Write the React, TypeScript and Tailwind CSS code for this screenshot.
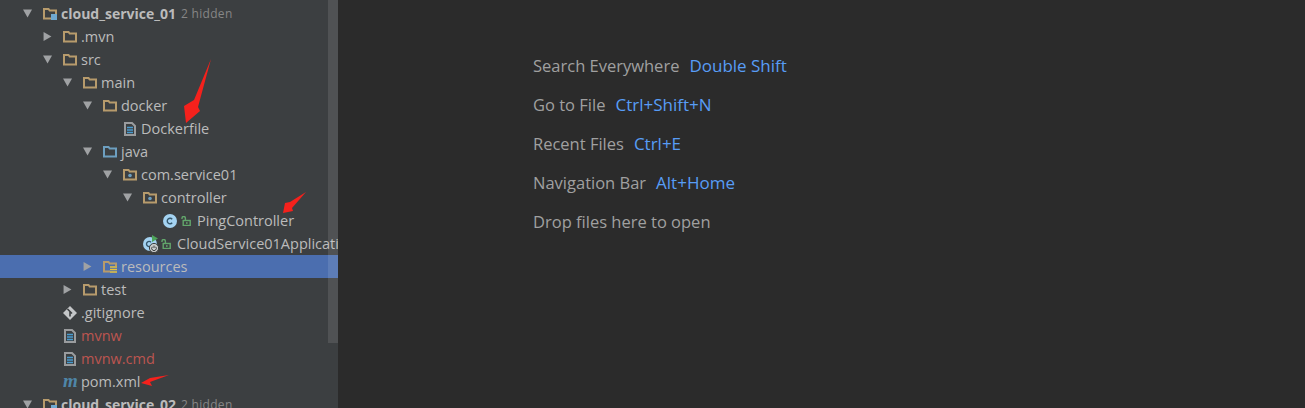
import React from 'react';

type IconKind = 'module' | 'folder' | 'source' | 'package' | 'resources' | 'file' | 'git' | 'maven' | 'class' | 'app';

interface TreeRow {
  depth: number;
  arrow?: 'open' | 'closed';
  icon: IconKind;
  label: string;
  bold?: boolean;
  hint?: string;
  locked?: boolean;
  selected?: boolean;
  changed?: boolean;
}

const rows: TreeRow[] = [
  { depth: 0, arrow: 'open', icon: 'module', label: 'cloud_service_01', bold: true, hint: '2 hidden' },
  { depth: 1, arrow: 'closed', icon: 'folder', label: '.mvn' },
  { depth: 1, arrow: 'open', icon: 'folder', label: 'src' },
  { depth: 2, arrow: 'open', icon: 'folder', label: 'main' },
  { depth: 3, arrow: 'open', icon: 'folder', label: 'docker' },
  { depth: 4, icon: 'file', label: 'Dockerfile' },
  { depth: 3, arrow: 'open', icon: 'source', label: 'java' },
  { depth: 4, arrow: 'open', icon: 'package', label: 'com.service01' },
  { depth: 5, arrow: 'open', icon: 'package', label: 'controller' },
  { depth: 6, icon: 'class', label: 'PingController', locked: true },
  { depth: 5, icon: 'app', label: 'CloudService01Application', locked: true },
  { depth: 3, arrow: 'closed', icon: 'resources', label: 'resources', selected: true },
  { depth: 2, arrow: 'closed', icon: 'folder', label: 'test' },
  { depth: 1, icon: 'git', label: '.gitignore' },
  { depth: 1, icon: 'file', label: 'mvnw', changed: true },
  { depth: 1, icon: 'file', label: 'mvnw.cmd', changed: true },
  { depth: 1, icon: 'maven', label: 'pom.xml' },
  { depth: 0, arrow: 'open', icon: 'module', label: 'cloud_service_02', bold: true, hint: '2 hidden' },
];

const hints = [
  { label: 'Search Everywhere', key: 'Double Shift' },
  { label: 'Go to File', key: 'Ctrl+Shift+N' },
  { label: 'Recent Files', key: 'Ctrl+E' },
  { label: 'Navigation Bar', key: 'Alt+Home' },
  { label: 'Drop files here to open' },
];

function FolderShape({ color }: { color: string }) {
  return <path d="M1 11.5V2h4.5l1.2 1.6H13V11.5Z" fill="none" stroke={color} strokeWidth="2" />;
}

function TreeIcon({ kind }: { kind: IconKind }) {
  const tan = '#b79b6c';
  return (
    <svg width="14" height="14" viewBox="0 0 14 14" className="shrink-0 overflow-visible">
      {kind === 'folder' && <FolderShape color={tan} />}
      {kind === 'source' && <FolderShape color="#6d9fc0" />}
      {kind === 'module' && (
        <>
          <FolderShape color={tan} />
          <rect x="8" y="7" width="6" height="6" fill="#6fa8d0" />
        </>
      )}
      {kind === 'package' && (
        <>
          <FolderShape color={tan} />
          <circle cx="7" cy="7.5" r="1.8" fill="#6d9fc0" />
        </>
      )}
      {kind === 'resources' && (
        <>
          <FolderShape color={tan} />
          <rect x="7" y="6" width="7" height="8" fill="#4b6eaf" />
          <path d="M7 7h7M7 9.5h7M7 12h7" stroke="#e8c33f" strokeWidth="1.6" />
        </>
      )}
      {kind === 'file' && (
        <>
          <path d="M2 1h7l3 3v9H2Z" fill="#3c3f41" stroke="#9a9c9e" strokeWidth="2" />
          <path d="M4 5.5h6M4 8h6M4 10.5h6" stroke="#4a9ccf" strokeWidth="1.3" />
        </>
      )}
      {kind === 'git' && (
        <>
          <path d="M7 0 14 7 7 14 0 7Z" fill="#c4c6c8" />
          <path d="M4.5 3 9 7.5M7 5.5V10.5" stroke="#3c3f41" strokeWidth="1.6" />
        </>
      )}
      {kind === 'class' && (
        <>
          <circle cx="7" cy="7" r="7" fill="#a4d3f2" />
          <path d="M9.2 5.2A2.8 2.8 0 1 0 9.2 8.8" fill="none" stroke="#35586e" strokeWidth="1.4" />
        </>
      )}
      {kind === 'app' && (
        <>
          <circle cx="7" cy="7" r="7" fill="#a4d3f2" />
          <path d="M8 5.2A2.6 2.6 0 1 0 8 8.8" fill="none" stroke="#35586e" strokeWidth="1.4" />
          <path d="M9 -2l6 3.5-6 3.5Z" fill="#4ea45a" />
          <circle cx="11" cy="11" r="4.6" fill="#c9cbcc" stroke="#3c3f41" />
          <path d="M11 8.6v2.4M9.3 9.8a2.3 2.3 0 1 0 3.4 0" fill="none" stroke="#3c3f41" strokeWidth="1" />
        </>
      )}
      {kind === 'maven' && (
        <text x="0" y="12" fontFamily="'Liberation Serif', serif" fontStyle="italic" fontWeight="700" fontSize="19" fill="#4f86a8">
          m
        </text>
      )}
    </svg>
  );
}

function LockIcon() {
  return (
    <svg width="10" height="10" viewBox="0 0 10 10" className="ml-1 mr-[2px] shrink-0">
      <path d="M1 3V2.2a1.7 1.7 0 0 1 3.4 0V4.5" fill="none" stroke="#62a66b" strokeWidth="1.4" />
      <rect x="2.2" y="4.5" width="7" height="5" fill="none" stroke="#62a66b" strokeWidth="1.4" />
      <rect x="5" y="6.2" width="1.6" height="1.6" fill="#62a66b" />
    </svg>
  );
}

function Arrow({ dir }: { dir: 'open' | 'closed' }) {
  return (
    <svg width="9" height="9" viewBox="0 0 8 8" className="shrink-0 -ml-px">
      {dir === 'open' ? <path d="M0 0.5h8L4 7.5Z" fill="#a0a2a4" /> : <path d="M0.5 0 7.5 4 0.5 8Z" fill="#a0a2a4" />}
    </svg>
  );
}

function Row({ row }: { row: TreeRow }) {
  return (
    <div
      className={`h-[23px] shrink-0 flex items-center whitespace-nowrap ${row.selected ? 'bg-[#4b6eaf]' : ''}`}
      style={{ paddingLeft: 24 + row.depth * 20 }}
    >
      <span className="w-[19px] shrink-0 flex items-center">{row.arrow && <Arrow dir={row.arrow} />}</span>
      <TreeIcon kind={row.icon} />
      {row.locked && <LockIcon />}
      <span className={`ml-1 ${row.bold ? 'font-bold text-[14px]' : ''} ${row.changed ? 'text-[#bc5550]' : 'text-[#bbbbbb]'}`}>{row.label}</span>
      {row.hint && <span className="ml-[5px] text-[12px] tracking-[0.3px] text-[#868686]">{row.hint}</span>}
    </div>
  );
}

export default function App() {
  return (
    <div className="h-screen w-full flex overflow-hidden bg-[#2b2b2b] font-['Open_Sans',sans-serif]">
      <div className="relative w-[338px] shrink-0 overflow-hidden bg-[#3c3f41] pt-[2px] text-[14.5px] flex flex-col">
        {rows.map((row) => (
          <Row key={row.label} row={row} />
        ))}
        <div className="absolute right-0 top-0 h-[343px] w-[10px] bg-[#ffffff]/10" />
        {/* red annotation arrows drawn on top of the screenshot */}
        <svg width="338" height="408" viewBox="0 0 338 408" className="absolute left-0 top-0">
          <path d="M211 59 194 100 184 106 186 123 200 111 198 107Z" fill="#f5211c" />
          <path d="M306 192 290 202 285 203 283 213 293 211 292 208Z" fill="#f5211c" />
          <path d="M169 375 150 378 141 383 152 386 150 382Z" fill="#f5211c" />
        </svg>
      </div>
      <div className="flex-1 pl-[195px] pt-[54px] flex flex-col gap-[15px] text-[16.5px] leading-[24px]">
        {hints.map((hint) => (
          <div key={hint.label} className="flex gap-[10px] whitespace-nowrap">
            <span className="text-[#a0a0a0]">{hint.label}</span>
            {hint.key && <span className="text-[17px] text-[#589df6]">{hint.key}</span>}
          </div>
        ))}
      </div>
    </div>
  );
}
